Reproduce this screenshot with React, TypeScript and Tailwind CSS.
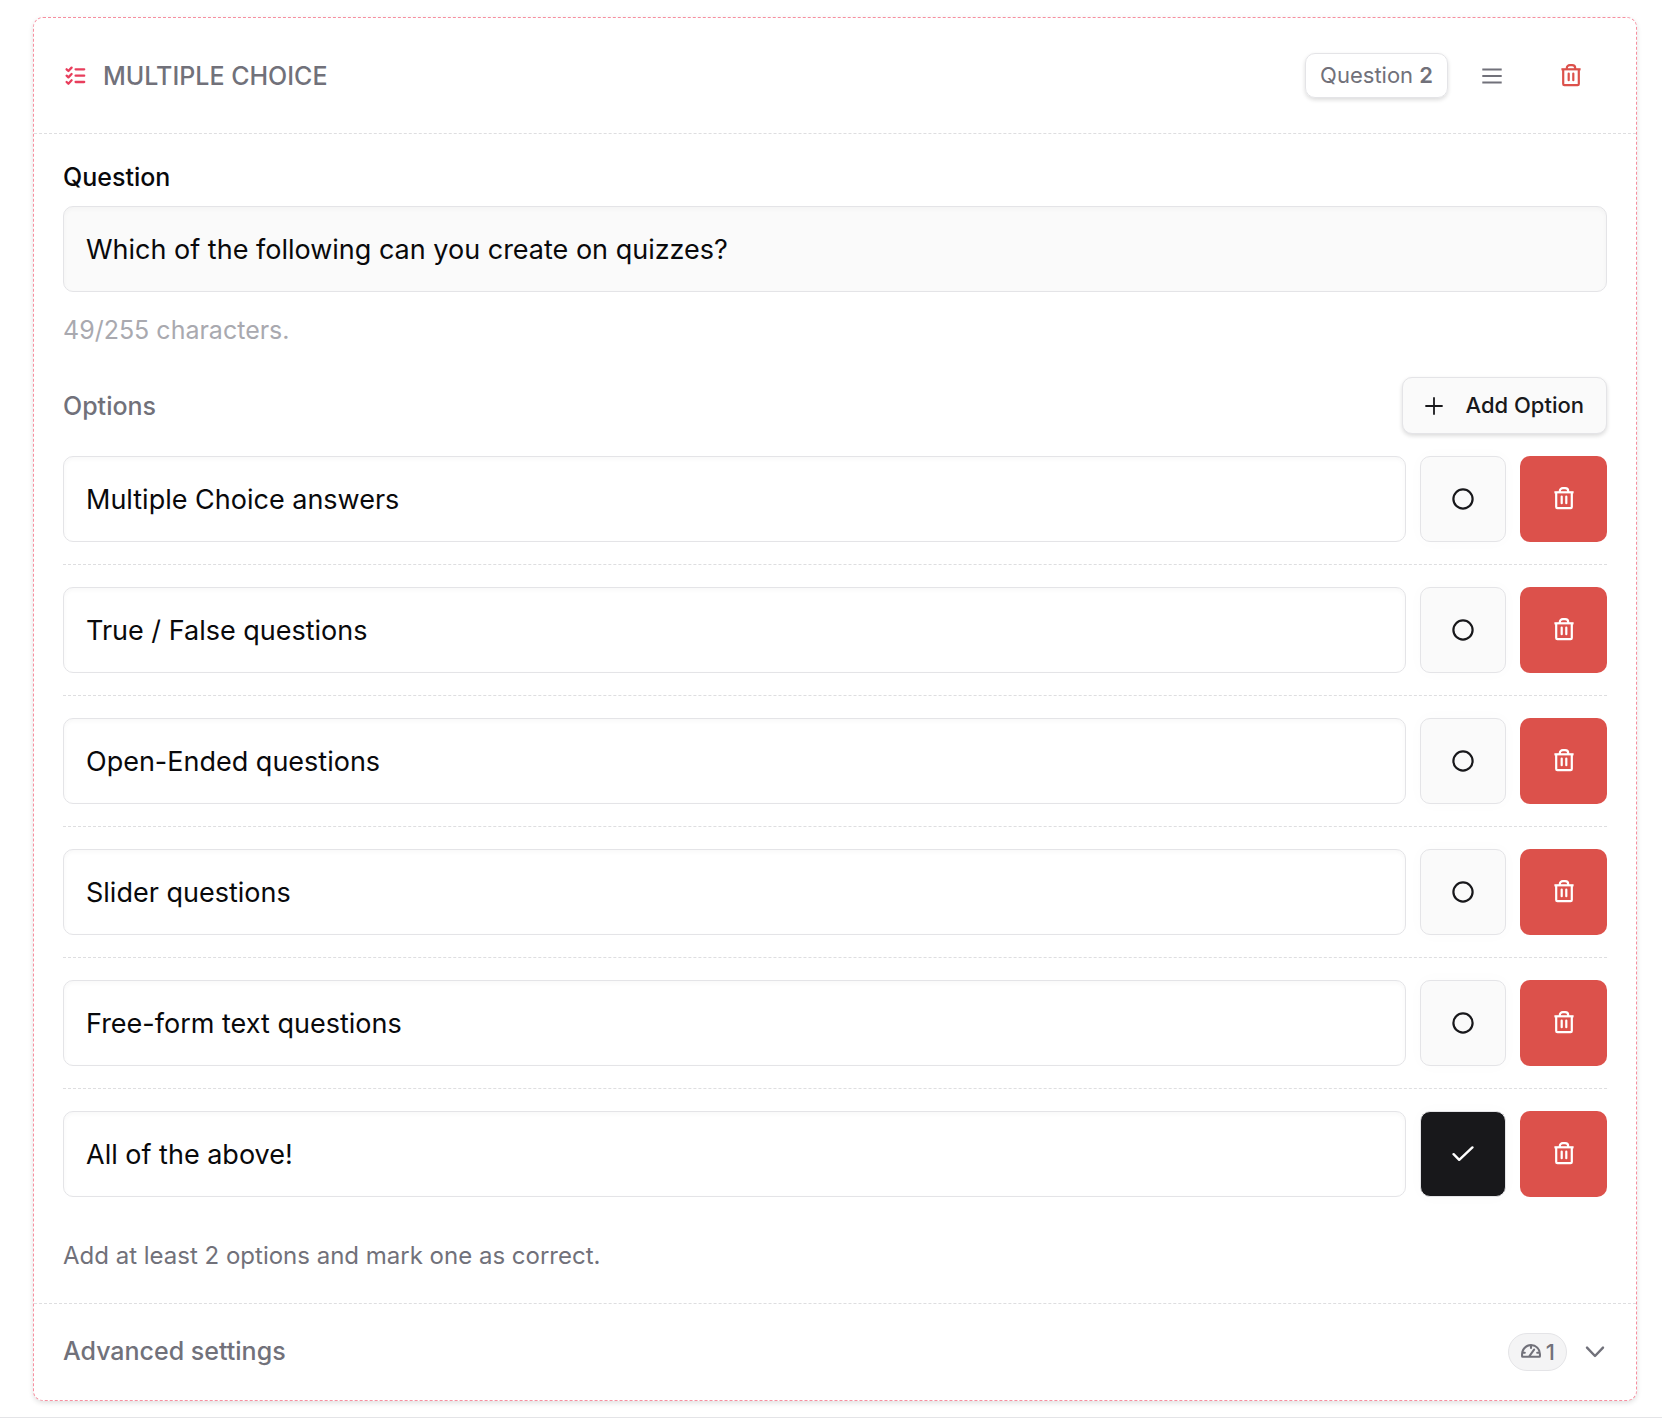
import { useState } from 'react'
import { PiGaugeBold } from 'react-icons/pi'

const initialOptions = [
  { id: 1, text: 'Multiple Choice answers', correct: false },
  { id: 2, text: 'True / False questions', correct: false },
  { id: 3, text: 'Open-Ended questions', correct: false },
  { id: 4, text: 'Slider questions', correct: false },
  { id: 5, text: 'Free-form text questions', correct: false },
  { id: 6, text: 'All of the above!', correct: true },
]

const MAX_LENGTH = 255

function ChecklistIcon() {
  return (
    <svg width="24" height="24" viewBox="0 0 24 24" fill="none" stroke="currentColor" strokeWidth="2.3" strokeLinecap="round" strokeLinejoin="round" aria-hidden="true">
      <path d="M12.6 5.3h8.6M12.6 11.7h8.6M12.6 18h8.6" />
      <path d="M3.6 5.3l1.8 1.7 3.2-3.4M3.6 11.7l1.8 1.7 3.2-3.4M3.6 18l1.8 1.7 3.2-3.4" />
    </svg>
  )
}

function TrashIcon() {
  return (
    <svg width="20" height="24" viewBox="0 0 20 24" fill="none" stroke="currentColor" strokeWidth="2.2" strokeLinejoin="round" aria-hidden="true">
      <path d="M.4 5.3h19.2" />
      <path d="M2.2 5.3v14.6a1.2 1.2 0 0 0 1.2 1.2h13.2a1.2 1.2 0 0 0 1.2-1.2V5.3" />
      <path d="M5.8 5.3V4.2a3 3 0 0 1 3-3h2.4a3 3 0 0 1 3 3v1.1" />
      <path d="M7.7 9.6v6.6M12.3 9.6v6.6" strokeLinecap="round" />
    </svg>
  )
}

function PlusIcon() {
  return (
    <svg width="18" height="18" viewBox="0 0 18 18" fill="none" stroke="currentColor" strokeWidth="1.8" strokeLinecap="round" aria-hidden="true">
      <path d="M9 1v16M1 9h16" />
    </svg>
  )
}

function MenuIcon() {
  return (
    <svg width="20" height="20" viewBox="0 0 20 20" fill="none" stroke="currentColor" strokeWidth="2.2" aria-hidden="true">
      <path d="M.3 3.5h19.4M.3 10h19.4M.3 16.5h19.4" />
    </svg>
  )
}

function ChevronIcon() {
  return (
    <svg width="24" height="24" viewBox="0 0 24 24" fill="none" stroke="currentColor" strokeWidth="2.4" strokeLinecap="round" strokeLinejoin="round" aria-hidden="true">
      <path d="M4 7.6l8 8.4 8-8.4" />
    </svg>
  )
}

function CircleIcon() {
  return (
    <svg width="22" height="22" viewBox="0 0 22 22" fill="none" stroke="currentColor" strokeWidth="2.2" aria-hidden="true">
      <circle cx="11" cy="11" r="9.6" />
    </svg>
  )
}

function CheckIcon() {
  return (
    <svg width="22" height="16" viewBox="0 0 22 16" fill="none" stroke="currentColor" strokeWidth="2.4" strokeLinecap="round" strokeLinejoin="round" aria-hidden="true">
      <path d="M1.6 8.2l5.6 5.6L20.4 1.4" />
    </svg>
  )
}

export default function App() {
  const [question, setQuestion] = useState(
    'Which of the following can you create on quizzes?'
  )
  const [options, setOptions] = useState(initialOptions)

  const addOption = () => {
    setOptions([...options, { id: Date.now(), text: '', correct: false }])
  }

  const removeOption = (id: number) => {
    setOptions(options.filter((option) => option.id !== id))
  }

  const editOption = (id: number, text: string) => {
    setOptions(options.map((o) => (o.id === id ? { ...o, text } : o)))
  }

  const markCorrect = (id: number) => {
    setOptions(options.map((o) => ({ ...o, correct: o.id === id })))
  }

  return (
    <main className="border-b border-[#e4e4e7] bg-white pt-[17px] pr-[25px] pb-4 pl-[33px] font-['Inter',sans-serif] text-[25px] text-[#71717a]">
      <section className="rounded-[10px] border border-dashed border-[#f78fa0] bg-white shadow-[0_2px_5px_rgba(0,0,0,0.12)]">
        <header className="flex items-center justify-between border-b border-dashed border-[#dedee0] px-[29px] py-[29px]">
          <div className="flex items-center gap-4">
            <span className="text-[#e83e5c]">
              <ChecklistIcon />
            </span>
            <h2 className="leading-9 font-medium uppercase">Multiple choice</h2>
          </div>
          <div className="flex items-center pr-2">
            <span className="mr-[15px] flex h-[45px] items-center rounded-[10px] border border-[#e4e4e7] px-[14px] text-[22px] shadow-[0_2px_4px_rgba(0,0,0,0.14)]">
              Question&nbsp;<strong className="font-semibold">2</strong>
            </span>
            <button type="button" aria-label="Reorder question" className="flex size-[57px] items-center justify-center">
              <MenuIcon />
            </button>
            <button type="button" aria-label="Delete question" className="ml-[22px] flex size-[57px] items-center justify-center text-[#dc514b]">
              <TrashIcon />
            </button>
          </div>
        </header>

        <div className="px-[29px] pt-[25px] pb-[29px]">
          <label htmlFor="question" className="block leading-9 font-medium text-[#09090b]">
            Question
          </label>
          <input
            id="question"
            type="text"
            maxLength={MAX_LENGTH}
            value={question}
            onChange={(e) => setQuestion(e.target.value)}
            className="mt-[11px] block h-[86px] w-full rounded-[10px] border border-[#e4e4e7] bg-[#fafafa] px-[22px] text-[27px] text-[#09090b] shadow-[inset_0_2px_4px_rgba(0,0,0,0.03)]"
          />
          <p className="mt-5 leading-9 text-[#a9a9af]">
            {question.length}/{MAX_LENGTH} characters.
          </p>

          <div className="mt-[29px] flex items-center justify-between">
            <h3 className="leading-9 font-medium">Options</h3>
            <button
              type="button"
              onClick={addOption}
              className="flex h-[57px] items-center gap-[22px] rounded-[10px] border border-[#e4e4e7] bg-[#fafafa] px-[22px] text-[22px] font-medium text-[#18181b] shadow-[0_2px_4px_rgba(0,0,0,0.14)]"
            >
              <PlusIcon />
              Add Option
            </button>
          </div>

          <ul className="divide-y divide-dashed divide-[#dedee0]">
            {options.map((option, index) => (
              <li key={option.id} className="flex gap-[14px] py-[22px]">
                <input
                  type="text"
                  aria-label={`Option ${index + 1}`}
                  value={option.text}
                  onChange={(e) => editOption(option.id, e.target.value)}
                  className="h-[86px] min-w-0 flex-1 rounded-[10px] border border-[#e4e4e7] px-[22px] text-[27px] text-[#09090b] shadow-[inset_0_2px_4px_rgba(0,0,0,0.03)]"
                />
                <button
                  type="button"
                  aria-label="Mark as correct"
                  aria-pressed={option.correct}
                  onClick={() => markCorrect(option.id)}
                  className={`flex size-[86px] items-center justify-center rounded-[10px] border border-[#e4e4e7] shadow-[0_0_18px_rgba(0,0,0,0.02)] ${
                    option.correct
                      ? 'bg-[#18181b] text-white'
                      : 'bg-[#fafafa] text-[#18181b]'
                  }`}
                >
                  {option.correct ? <CheckIcon /> : <CircleIcon />}
                </button>
                <button
                  type="button"
                  aria-label="Remove option"
                  onClick={() => removeOption(option.id)}
                  className="flex h-[86px] w-[87px] items-center justify-center rounded-[10px] bg-[#dc514b] text-white"
                >
                  <TrashIcon />
                </button>
              </li>
            ))}
          </ul>

          <p className="mt-[19px] text-2xl leading-9">
            Add at least 2 options and mark one as correct.
          </p>
        </div>

        <button
          type="button"
          aria-expanded="false"
          className="flex w-full items-center justify-between border-t border-dashed border-[#dedee0] px-[29px] py-[29px] font-medium"
        >
          Advanced settings
          <span className="flex items-center gap-4">
            <span className="flex h-[38px] items-center gap-1 rounded-full border border-[#e4e4e7] bg-[#f4f4f5] px-[11px] text-[22px]">
              <PiGaugeBold size={22} />1
            </span>
            <ChevronIcon />
          </span>
        </button>
      </section>
    </main>
  )
}
